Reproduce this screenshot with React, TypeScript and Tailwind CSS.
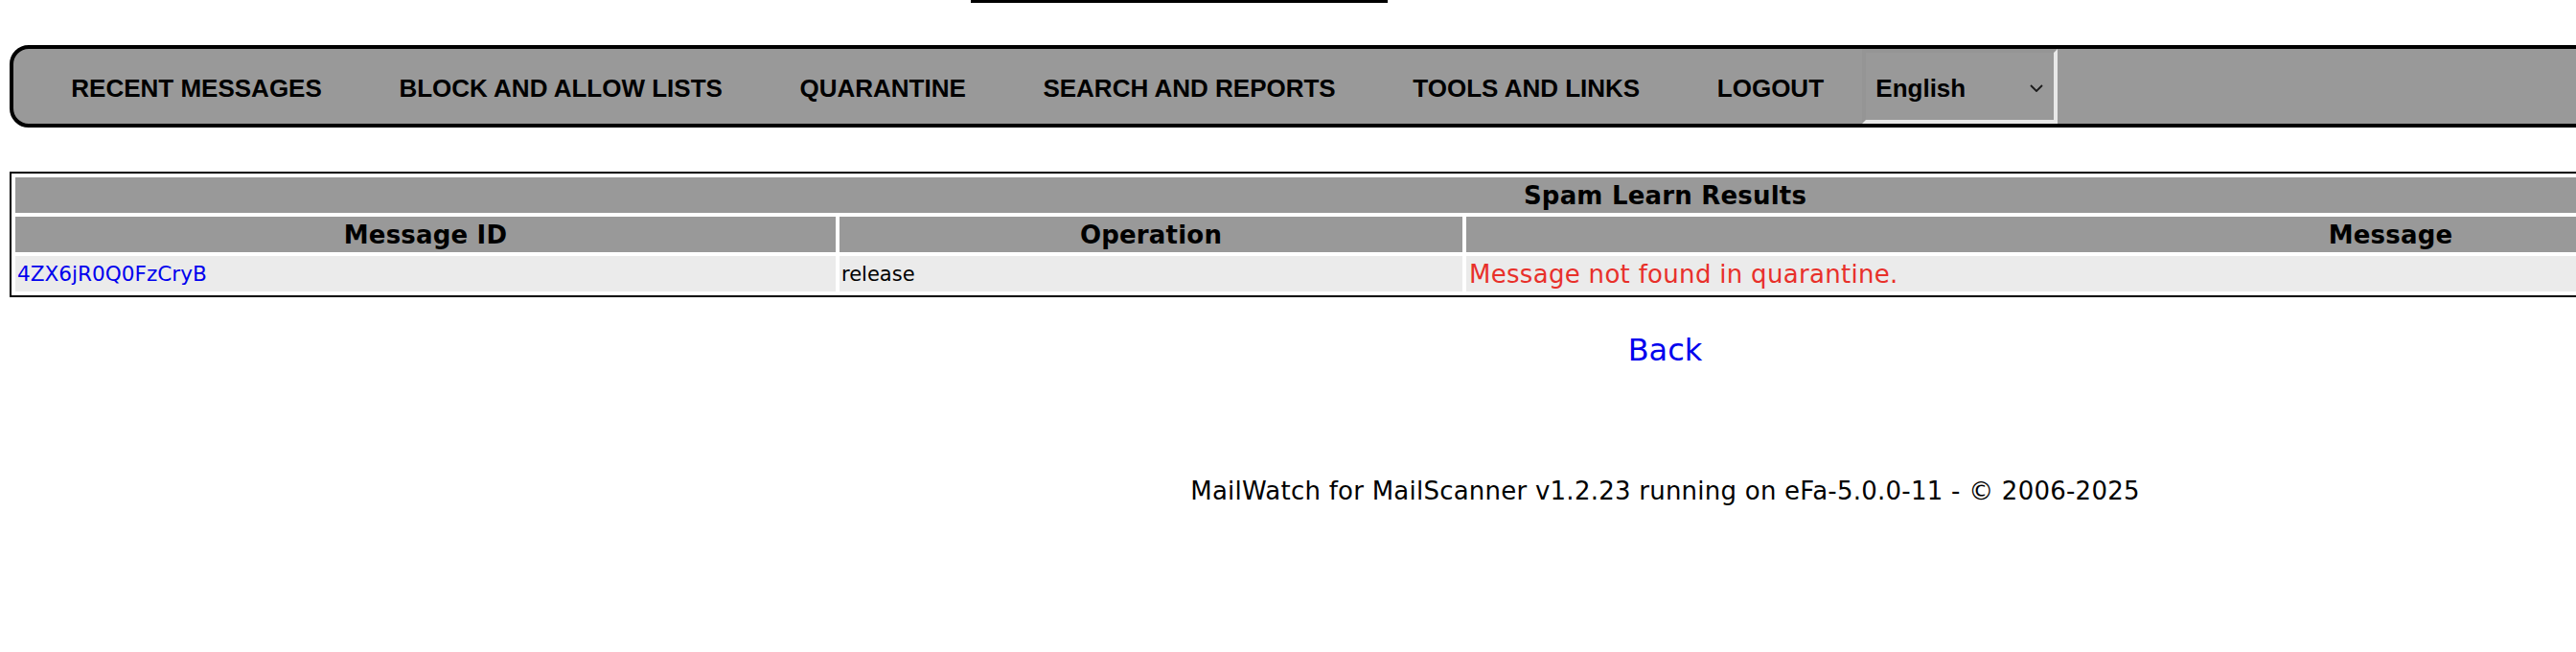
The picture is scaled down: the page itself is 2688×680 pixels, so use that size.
import React from "react";

const navItems = [
  "RECENT MESSAGES",
  "BLOCK AND ALLOW LISTS",
  "QUARANTINE",
  "SEARCH AND REPORTS",
  "TOOLS AND LINKS",
  "LOGOUT",
];

export default function App() {
  return (
    <div className="w-[3475px] px-[10px] bg-white text-black">
      {/* bottom edge of the element above (scrolled off) */}
      <div className="ml-[1003px] w-[435px] h-[3px] bg-black" />

      {/* Navigation bar */}
      <div className="mt-[44px] w-[3455px] h-[86px] border-4 border-black rounded-[20px] bg-[#999999] flex items-stretch pl-[20px] font-['Liberation_Sans',Arial,sans-serif] font-bold text-[26px] leading-[30px]">
        {navItems.map((item) => (
          <div key={item} className="px-[40.3px] pt-[3px] flex items-center whitespace-nowrap">
            {item}
          </div>
        ))}
        <div className="w-[204px] flex items-center justify-between pl-[10px] pr-[10px] pt-[3px] border-4 border-t-[#959595] border-l-[#959595] border-b-[#e8e8e8] border-r-[#e8e8e8] bg-[#999999]">
          <span>English</span>
          <svg width="14" height="8" viewBox="0 0 14 8" className="mr-[1px]">
            <polyline points="1,1 7,7 13,1" fill="none" stroke="#1a1a1a" strokeWidth="1.8" />
          </svg>
        </div>
      </div>

      {/* Results table */}
      <table className="mt-[46px] w-[3455px] table-fixed border-separate border-spacing-[4px] border-2 border-black font-['DejaVu_Sans',Verdana,sans-serif]">
        <colgroup>
          <col className="w-[856px]" />
          <col className="w-[650px]" />
          <col className="w-[1929px]" />
        </colgroup>
        <tbody>
          <tr className="h-[37px]">
            <td colSpan={3} className="bg-[#999999] text-center font-bold text-[26px] leading-[30px] tracking-[0.2px] p-0 align-middle">
              Spam Learn Results
            </td>
          </tr>
          <tr className="h-[37px]">
            <td className="bg-[#999999] text-center font-bold text-[26px] leading-[30px] tracking-[0.2px] p-0 align-middle">Message ID</td>
            <td className="bg-[#999999] text-center font-bold text-[26px] leading-[30px] tracking-[0.2px] p-0 align-middle">Operation</td>
            <td className="bg-[#999999] text-center font-bold text-[26px] leading-[30px] tracking-[0.2px] p-0 align-middle">Message</td>
          </tr>
          <tr className="h-[37px]">
            <td className="bg-[#ebebeb] text-left text-[21.6px] leading-[26px] pl-[2px] py-0 align-middle">
              <a className="text-[#0000ee]">4ZX6jR0Q0FzCryB</a>
            </td>
            <td className="bg-[#ebebeb] text-left text-[21px] leading-[26px] pl-[2px] py-0 align-middle">release</td>
            <td className="bg-[#ebebeb] text-left text-[26px] leading-[30px] tracking-[0.3px] pl-[3px] py-0 align-middle text-[#e8302a]">
              Message not found in quarantine.
            </td>
          </tr>
        </tbody>
      </table>

      {/* Back link */}
      <div className="mt-[36px] w-[3455px] text-center font-['DejaVu_Sans',Verdana,sans-serif] text-[32px] leading-[38px]">
        <a className="text-[#0000ee]">Back</a>
      </div>

      {/* Footer */}
      <div className="mt-[113px] w-[3455px] text-center font-['DejaVu_Sans',Verdana,sans-serif] text-[26px] leading-[30px] tracking-[0.24px]">
        MailWatch for MailScanner v1.2.23 running on eFa-5.0.0-11 - © 2006-2025
      </div>
    </div>
  );
}
